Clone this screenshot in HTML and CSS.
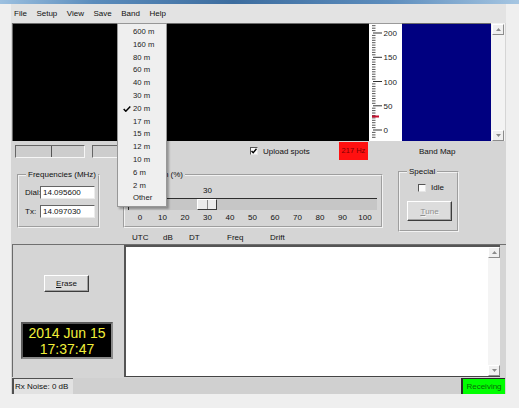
FILE: index.html
```html
<!DOCTYPE html>
<html>
<head>
<meta charset="utf-8">
<link rel="stylesheet" href="styles.css">
</head>
<body>
<div class="titlebar"></div>
<div class="window">
  <nav class="menubar">
    <span>File</span><span>Setup</span><span>View</span><span>Save</span><span>Band</span><span>Help</span>
  </nav>

  <div class="displays">
    <div class="waterfall"></div>
    <div class="scale">
      <svg width="33" height="118" viewBox="0 0 33 118">
        <path class="minor" d="M3 2.7H6.5M3 5.2H6.5M3 7.6H6.5M3 12.4H6.5M3 14.9H6.5M3 17.3H6.5M3 19.7H6.5M3 22.1H6.5M3 24.6H6.5M3 27H6.5M3 29.4H6.5M3 31.8H6.5M3 36.7H6.5M3 39.1H6.5M3 41.5H6.5M3 44H6.5M3 46.4H6.5M3 48.8H6.5M3 51.2H6.5M3 53.7H6.5M3 56.1H6.5M3 60.9H6.5M3 63.4H6.5M3 65.8H6.5M3 68.2H6.5M3 70.6H6.5M3 73.1H6.5M3 75.5H6.5M3 77.9H6.5M3 80.3H6.5M3 85.2H6.5M3 87.6H6.5M3 90H6.5M3 92.5H6.5M3 94.9H6.5M3 97.3H6.5M3 99.7H6.5M3 102.2H6.5M3 104.6H6.5M3 109.4H6.5M3 111.9H6.5M3 114.3H6.5"/>
        <path class="major" d="M4 10H13M4 34.3H13M4 58.5H13M4 82.8H13M4 107H13"/>
        <rect x="3" y="92.5" width="7" height="2" fill="#c8102e"/>
        <text x="14.5" y="13">200</text>
        <text x="14.5" y="37.3">150</text>
        <text x="14.5" y="61.5">100</text>
        <text x="14.5" y="85.8">50</text>
        <text x="14.5" y="110">0</text>
      </svg>
    </div>
    <div class="bandmap"></div>
    <div class="vscroll">
      <span class="arrow"><svg width="5" height="3" viewBox="0 0 5 3"><polygon points="0,3 2.5,0 5,3" fill="#8a8a8a"/></svg></span>
      <span class="arrow"><svg width="5" height="3" viewBox="0 0 5 3"><polygon points="0,0 2.5,3 5,0" fill="#8a8a8a"/></svg></span>
    </div>
  </div>

  <div class="row-a">
    <div class="meter m1"><span class="seg"></span></div>
    <div class="meter m2"></div>
    <div class="upload">
      <span class="cb"><svg width="6" height="6" viewBox="0 0 6 6"><polyline points="0.5,3 2.2,4.8 5.5,0.8" fill="none" stroke="#000" stroke-width="1.4"/></svg></span>
      <span>Upload spots</span>
    </div>
    <div class="offset">217 Hz</div>
    <div class="bm-label">Band Map</div>
  </div>

  <div class="row-b">
    <fieldset class="group freq">
      <legend>Frequencies (MHz)</legend>
      <div class="freq-grid">
        <span>Dial:</span><span class="field">14.095600</span>
        <span>Tx:</span><span class="field">14.097030</span>
      </div>
    </fieldset>
    <fieldset class="group txf">
      <legend>Tx fraction (%)</legend>
      <div class="slider" style="--v:0.3">
        <div class="slider-value"><span>30</span></div>
        <div class="trough"><span class="thumb"></span></div>
        <div class="ticks">
          <span>0</span><span>10</span><span>20</span><span>30</span><span>40</span><span>50</span><span>60</span><span>70</span><span>80</span><span>90</span><span>100</span>
        </div>
      </div>
    </fieldset>
    <fieldset class="group special">
      <legend>Special</legend>
      <div class="idle"><span class="cb"></span><span>Idle</span></div>
      <div class="btn tune"><u>T</u>une</div>
    </fieldset>
  </div>

  <div class="headers">
    <span class="h-utc">UTC</span><span class="h-db">dB</span><span class="h-dt">DT</span><span class="h-freq">Freq</span><span>Drift</span>
  </div>

  <div class="bottom">
    <div class="left-panel">
      <div class="btn erase"><u>E</u>rase</div>
      <div class="clock">2014 Jun 15<br>17:37:47</div>
    </div>
    <div class="log">
      <div class="log-text"></div>
      <div class="vscroll log-scroll">
        <span class="arrow"><svg width="5" height="3" viewBox="0 0 5 3"><polygon points="0,3 2.5,0 5,3" fill="#8a8a8a"/></svg></span>
        <span class="arrow"><svg width="5" height="3" viewBox="0 0 5 3"><polygon points="0,0 2.5,3 5,0" fill="#8a8a8a"/></svg></span>
      </div>
    </div>
  </div>

  <div class="status">
    <span class="noise">Rx Noise: 0 dB</span>
    <span class="receiving">Receiving</span>
  </div>
</div>

<div class="menu">
  <div class="item"><span class="mark"></span>600 m</div>
  <div class="item"><span class="mark"></span>160 m</div>
  <div class="item"><span class="mark"></span>80 m</div>
  <div class="item"><span class="mark"></span>60 m</div>
  <div class="item"><span class="mark"></span>40 m</div>
  <div class="item"><span class="mark"></span>30 m</div>
  <div class="item"><span class="mark"><svg width="8" height="6" viewBox="0 0 8 6"><polyline points="0.7,3 2.8,5.2 7.3,0.6" fill="none" stroke="#000" stroke-width="1.5"/></svg></span>20 m</div>
  <div class="item"><span class="mark"></span>17 m</div>
  <div class="item"><span class="mark"></span>15 m</div>
  <div class="item"><span class="mark"></span>12 m</div>
  <div class="item"><span class="mark"></span>10 m</div>
  <div class="item"><span class="mark"></span>6 m</div>
  <div class="item"><span class="mark"></span>2 m</div>
  <div class="item"><span class="mark"></span>Other</div>
</div>
</body>
</html>
```

FILE: styles.css
```css
* { box-sizing: border-box; }

body {
  margin: 0;
  width: 519px;
  height: 408px;
  overflow: hidden;
  position: relative;
  background: #efefef;
  font-family: "Liberation Sans", Arial, sans-serif;
  font-size: 8px;
  color: #111;
}

.titlebar {
  height: 4px;
  background: linear-gradient(90deg, #9cc0e0 0%, #5b8cbc 18%, #3d6d9f 45%, #5d8dbd 75%, #a6c6e2 100%);
}

.window {
  margin-left: 11px;
  width: 495px;
  background: #d5d5d5;
}

/* menu bar */
.menubar {
  height: 19px;
  display: flex;
  align-items: center;
  gap: 9.5px;
  padding-left: 3px;
  background: #e3e3e3;
  line-height: 19px;
}

/* displays */
.displays {
  display: flex;
  height: 118px;
  margin-left: 1px;
}
.waterfall {
  width: 357px;
  background: #000;
  border-top: 1px solid #6c6c6c;
  border-left: 1px solid #6c6c6c;
}
.scale {
  width: 33px;
  background: #fff;
  border-top: 1px solid #9a9a9a;
}
.scale svg { display: block; margin-top: -1px; }
.scale .minor { stroke: #555; stroke-width: 1; }
.scale .major { stroke: #333; stroke-width: 1; }
.scale text { font-family: "Liberation Sans", Arial, sans-serif; font-size: 8px; fill: #222; }
.bandmap {
  width: 89px;
  background: #000080;
  border-top: 1px solid #6c6c6c;
}
.vscroll {
  width: 14px;
  background: #f3f3f3;
  display: flex;
  flex-direction: column;
  justify-content: space-between;
  padding: 1px 1px 0 1px;
}
.arrow {
  width: 12px;
  height: 11px;
  display: flex;
  align-items: center;
  justify-content: center;
  background: #f0f0f0;
  border-top: 1px solid #fff;
  border-left: 1px solid #fff;
  border-right: 1px solid #8c8c8c;
  border-bottom: 1px solid #8c8c8c;
}
.arrow svg { display: block; }

/* row a */
.row-a {
  display: flex;
  align-items: center;
  height: 18px;
  margin-top: 1px;
}
.meter {
  height: 13px;
  background: #cdcdcd;
  border-top: 1px solid #666;
  border-left: 1px solid #666;
  border-right: 1px solid #f6f6f6;
  border-bottom: 1px solid #f6f6f6;
}
.m1 { margin-left: 4px; width: 70px; }
.m1 .seg {
  display: block;
  width: 36px;
  height: 100%;
  border-right: 1px solid #555;
}
.m2 { margin-left: 7px; width: 58px; }
.upload {
  margin-left: 100px;
  width: 89px;
  display: flex;
  align-items: center;
  gap: 5px;
}
.cb {
  width: 8px;
  height: 8px;
  background: #fbfbfb;
  border-top: 1px solid #555;
  border-left: 1px solid #555;
  border-right: 1px solid #e6e6e6;
  border-bottom: 1px solid #e6e6e6;
  display: flex;
  align-items: center;
  justify-content: center;
}
.cb svg { display: block; }
.offset {
  width: 29px;
  height: 18px;
  line-height: 18px;
  text-align: center;
  background: #ff1010;
  color: #7a0000;
  font-size: 7.5px;
}
.bm-label { margin-left: 51px; }

/* row b */
.row-b {
  display: flex;
  align-items: flex-start;
  height: 65px;
  margin-top: 7px;
}
.group {
  margin: 0;
  padding: 0;
  min-width: 0;
  border: 2px groove #f2f2f2;
}
.group legend {
  padding: 0 2px;
  margin-left: 7px;
  line-height: 10px;
  font-size: 8px;
}
.txf legend { margin-left: 4px; }
.freq { margin: 3px 0 0 6px; width: 83px; height: 58px; }
.txf { margin: 3px 0 0 23px; width: 260px; height: 58px; }
.special { margin-left: 15px; width: 61px; height: 65px; }

.freq-grid {
  display: grid;
  grid-template-columns: 15px 55px;
  grid-auto-rows: 13px;
  row-gap: 6px;
  align-items: center;
  margin: 6px 0 0 6px;
}
.field {
  height: 13px;
  line-height: 11px;
  padding-left: 2px;
  background: #fff;
  border-top: 1px solid #646464;
  border-left: 1px solid #646464;
  border-right: 1px solid #ececec;
  border-bottom: 1px solid #ececec;
}

.slider { margin: 3px 4px 0 2px; }
.slider-value { height: 15px; line-height: 15px; }
.slider-value span {
  display: block;
  width: 20px;
  text-align: center;
  margin-left: calc(var(--v) * 225px + 3px);
}
.trough {
  position: relative;
  height: 12px;
  width: 249px;
  margin-left: 1px;
  background: #c6c6c6;
  border-top: 1px solid #2e2e2e;
}
.trough::before {
  content: "";
  position: absolute;
  left: 0;
  bottom: 0;
  width: 1px;
  height: 5px;
  background: #333;
}
.thumb {
  position: absolute;
  top: 0;
  left: calc(var(--v) * 225px + 1.5px);
  width: 20px;
  height: 11px;
  background: linear-gradient(90deg, #ececec 0 9px, #8a8a8a 9px 10px, #ececec 10px);
  border-top: 1px solid #fff;
  border-left: 1px solid #fff;
  border-right: 1px solid #3a3a3a;
  border-bottom: 1px solid #3a3a3a;
}
.ticks {
  display: grid;
  grid-template-columns: repeat(11, 22.5px);
  margin: 3px 0 0 1.75px;
  line-height: 10px;
  text-align: center;
}

.idle {
  display: flex;
  align-items: center;
  gap: 5px;
  height: 9px;
  margin: 6px 0 0 18px;
}
.btn {
  display: flex;
  align-items: center;
  justify-content: center;
  background: #dcdcdc;
  border-top: 1px solid #fff;
  border-left: 1px solid #fff;
  border-right: 1px solid #3c3c3c;
  border-bottom: 1px solid #3c3c3c;
  box-shadow: inset -1px -1px 0 #a0a0a0;
}
.tune {
  width: 45px;
  height: 20px;
  margin: 9px 0 0 7px;
  color: #8e8e8e;
  text-shadow: 1px 1px 0 #f4f4f4;
}

/* headers */
.headers {
  display: flex;
  height: 12px;
  line-height: 12px;
  padding-left: 121px;
}
.h-utc { width: 31px; }
.h-db { width: 26px; }
.h-dt { width: 38px; }
.h-freq { width: 43px; }

/* bottom */
.bottom {
  display: flex;
  height: 133px;
  width: 494px;
  margin-left: 1px;
  border-top: 1px solid #707070;
}
.left-panel {
  width: 112px;
  border-left: 1px solid #6a6a6a;
  display: flex;
  flex-direction: column;
  align-items: flex-start;
}
.erase {
  width: 45px;
  height: 17px;
  margin: 30px 0 0 31px;
}
.clock {
  width: 92px;
  height: 37px;
  margin: 30px 0 0 8px;
  background: #000;
  border: 2px solid #5a5a5a;
  border-right-color: #8a8a8a;
  border-bottom-color: #8a8a8a;
  color: #f2f03a;
  font-size: 14px;
  line-height: 16px;
  text-align: center;
  padding-top: 1px;
}
.log {
  width: 376px;
  display: flex;
  background: #fff;
  border-left: 2px solid #555;
  border-top: 2px solid #555;
  border-bottom: 1px solid #444;
}
.log-text { flex: 1; }
.log-scroll {
  width: 12px;
  padding: 0;
  background: #f4f4f4;
}
.log-scroll .arrow { width: 12px; height: 11px; }

/* status */
.status {
  display: flex;
  width: 493px;
  height: 16px;
  margin: 1px 0 0 1px;
  background: #d0d0d0;
  line-height: 15px;
}
.noise {
  width: 61px;
  background: #e2e2e2;
  border-left: 2px solid #505050;
  border-top: 1px solid #505050;
  padding-left: 1px;
}
.receiving {
  margin-left: auto;
  width: 44px;
  background: #00ff00;
  border-left: 2px solid #2a2a2a;
  border-top: 1px solid #2a2a2a;
  color: #0a6a0a;
  text-align: center;
}

/* dropdown menu */
.menu {
  position: absolute;
  left: 117px;
  top: 23px;
  width: 50px;
  height: 184px;
  padding-top: 2px;
  background: #efefef;
  border: 1px solid #979797;
  box-shadow: 2px 2px 2px rgba(0, 0, 0, 0.3);
}
.menu .item {
  display: flex;
  align-items: center;
  height: 12.8px;
  line-height: 12.8px;
  font-size: 7.7px;
  color: #222;
}
.menu .mark {
  width: 15px;
  height: 100%;
  display: flex;
  align-items: center;
  padding-left: 5px;
}
.menu .mark svg { display: block; }
```
